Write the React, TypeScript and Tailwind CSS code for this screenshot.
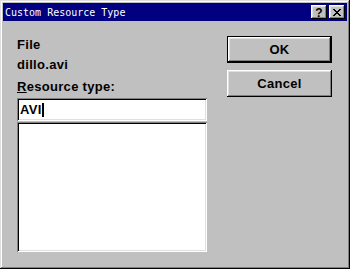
import React from "react";

const raised =
  "shadow-[inset_-1px_-1px_0_#000000,inset_1px_1px_0_#ffffff,inset_-2px_-2px_0_#808080,inset_2px_2px_0_#dfdfdf]";
const sunken =
  "shadow-[inset_1px_1px_0_#808080,inset_-1px_-1px_0_#ffffff,inset_2px_2px_0_#000000,inset_-2px_-2px_0_#dfdfdf]";

export default function App() {
  return (
    <div className="w-[350px] h-[269px] bg-[#c0c0c0] p-[3px] flex flex-col font-['Liberation_Sans',Arial,sans-serif] shadow-[inset_-1px_-1px_0_#000000,inset_1px_1px_0_#dfdfdf,inset_-2px_-2px_0_#808080,inset_2px_2px_0_#ffffff]">
      <div className="h-[18px] bg-[#000080] flex items-center pl-[2px] pr-[2px]">
        <div className="flex-1 flex">
          <span
            className="text-white whitespace-pre leading-none mt-[1px]"
            style={{ fontFamily: "'DejaVu Sans Mono', 'Liberation Mono', monospace", fontSize: "10px", letterSpacing: "0px" }}
          >
            Custom Resource Type
          </span>
        </div>
        <div className={`w-[16px] h-[14px] bg-[#c0c0c0] ${raised} flex items-center justify-center`}>
          <span className="text-[12px] font-bold leading-none text-black mt-[1px]">?</span>
        </div>
        <div className={`ml-[2px] w-[16px] h-[14px] bg-[#c0c0c0] ${raised} flex items-center justify-center`}>
          <svg width="8" height="7" viewBox="0 0 8 7" shapeRendering="crispEdges">
            <path
              d="M0 0h2v1h-2zM6 0h2v1h-2zM1 1h2v1h-2zM5 1h2v1h-2zM2 2h4v1h-4zM3 3h2v1h-2zM2 4h4v1h-4zM1 5h2v1h-2zM5 5h2v1h-2zM0 6h2v1h-2zM6 6h2v1h-2z"
              fill="#000"
            />
          </svg>
        </div>
      </div>
      <div className="flex pl-[14px] gap-[20px]">
        <div className="w-[190px] flex flex-col text-[13px] font-bold text-black leading-[15px] tracking-[0.3px]">
          <div className="mt-[16px]">File</div>
          <div className="mt-[5px]">dillo.avi</div>
          <div className="mt-[7px]">
            <span className="underline underline-offset-[1px]">R</span>esource type:
          </div>
          <div className={`mt-[4px] h-[23px] bg-white ${sunken} flex items-center pl-[3px]`}>
            <span>AVI</span>
            <span className="w-[2px] h-[14px] bg-black" />
          </div>
          <div className={`mt-[1px] h-[130px] bg-white ${sunken}`} />
        </div>
        <div className="w-[105px] flex flex-col text-[13px] font-bold text-black tracking-[0.3px]">
          <div className="mt-[15px] h-[27px] border border-black">
            <div className={`w-full h-full ${raised} flex items-center justify-center`}>OK</div>
          </div>
          <div className={`mt-[7px] h-[27px] ${raised} flex items-center justify-center`}>Cancel</div>
        </div>
      </div>
    </div>
  );
}
